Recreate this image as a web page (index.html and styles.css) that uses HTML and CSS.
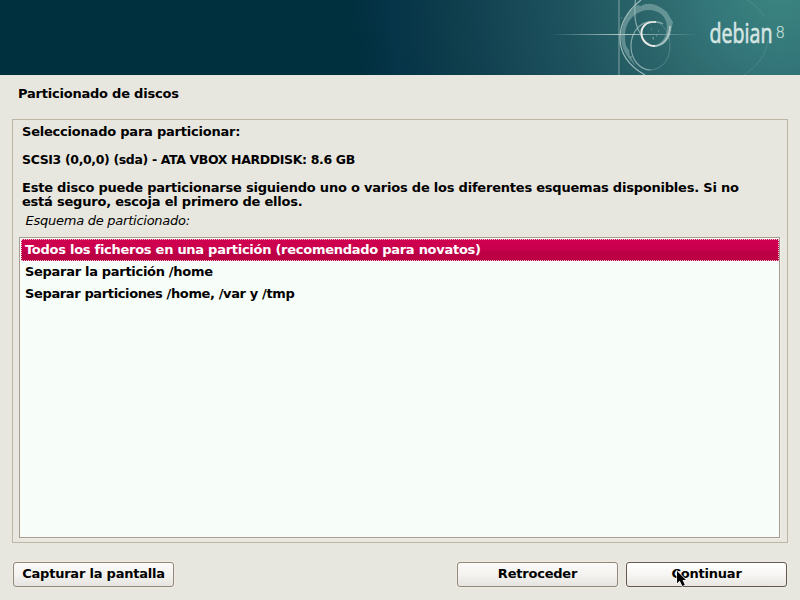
FILE: index.html
```html
<!DOCTYPE html>
<html lang="es">
<head>
<meta charset="utf-8">
<title>Particionado de discos</title>
<link rel="stylesheet" href="styles.css">
</head>
<body>
<header class="banner">
  <svg class="art" width="260" height="75" viewBox="540 0 260 75" fill="none" stroke="#b9d0cc" aria-hidden="true">
    <defs>
      <linearGradient id="beam" gradientUnits="userSpaceOnUse" x1="550" y1="0" x2="698" y2="0">
        <stop offset="0" stop-color="#c3d7d4" stop-opacity="0"/>
        <stop offset=".5" stop-color="#c3d7d4" stop-opacity=".9"/>
        <stop offset="1" stop-color="#c3d7d4" stop-opacity="0"/>
      </linearGradient>
    </defs>
    <path d="M619 0V75" stroke-width="1.8" opacity=".35"/>
    <rect x="550" y="34" width="148" height="1" fill="url(#beam)" stroke="none"/>
    <path d="M641 0C627 11 620 23 620 38C620 53 629 66 645 75" stroke-width="1.2" opacity=".8"/>
    <path d="M635.5 0C634 12 634 24 640 33C642 38 645 42 649 44" stroke-width="1.2" opacity=".65"/>
    <path d="M621 37C621 24 628 11 635 7L637 5L641 6C645 3 652 3 658 6L663 9L667 12L671 19L673 22L671 31C670 40 663 47 654 47L654 45.5C662 44 667 36 667 28C667 16 659 10 648 10C634 11 625 23 625 36C625 43 626 47 629 50L630 56L636 66C626 57 621 48 621 37Z" fill="#9bbdbb" stroke="none" opacity=".5"/>
    <path d="M670 26C670 38 663 46 654 46" stroke="#c7dbd7" stroke-width="1.8" opacity=".7"/>
    <path d="M663 24C659 21 655 22 653 22" stroke="#c7dbd7" stroke-width="1.2" opacity=".6"/>
    <path d="M656 22C646 21 641 27 641.5 34C642 41 647 46 655 46" stroke="#f1eee8" stroke-width="1.9"/>
    <path d="M656 22C641 19 631 32 631 46C631 60 640 70 651 70" stroke-width="1.2" opacity=".65"/>
    <path d="M651 70C662 69 670 60 670 46C670 34 664 24 656 22" opacity=".28"/>
    <path d="M651 29h1M658 31h1M652 38h2M653 39h1M656 36h1M621 18h1M630 57h2" opacity=".6"/>
    <path d="M747 0C756 5 761 11 764 17M768 40C766 54 758 66 744 75" opacity=".16"/>
    <text class="wordmark" x="709.5" y="43" textLength="63" lengthAdjust="spacingAndGlyphs">debian</text>
    <text class="version" x="775.5" y="38" textLength="9.5" lengthAdjust="spacingAndGlyphs">8</text>
  </svg>
</header>
<main class="installer">
  <h1 class="title">Particionado de discos</h1>
  <section class="panel">
    <div class="description">
      <p>Seleccionado para particionar:</p>
      <p class="disk">SCSI3 (0,0,0) (sda) - ATA VBOX HARDDISK: 8.6 GB</p>
      <p>Este disco puede particionarse siguiendo uno o varios de los diferentes esquemas disponibles. Si no<br>está seguro, escoja el primero de ellos.</p>
    </div>
    <div class="label">Esquema de particionado:</div>
    <ul class="options">
      <li class="option selected">Todos los ficheros en una partición (recomendado para novatos)</li>
      <li class="option home">Separar la partición /home</li>
      <li class="option split">Separar particiones /home, /var y /tmp</li>
    </ul>
  </section>
  <footer class="actions">
    <button class="button">Capturar la pantalla</button>
    <button class="button back">Retroceder</button>
    <button class="button hover">Continuar</button>
  </footer>
</main>
<svg class="cursor" width="12" height="18" viewBox="0 0 12 18" aria-hidden="true"><path d="M1 1V13.3L3.8 10.8L6.3 16L8.8 15L6.6 10H10Z" fill="#000" stroke="#fff" stroke-width="1.2" paint-order="stroke"/></svg>
</body>
</html>
```
FILE: styles.css
```css
* { box-sizing: border-box; }
body {
  margin: 0;
  width: 800px;
  height: 600px;
  overflow: hidden;
  position: relative;
  display: flex;
  flex-direction: column;
  background: #e8e7df;
  color: #000;
  font: bold 13px/14px "DejaVu Sans", sans-serif;
  letter-spacing: -.215px;
}
.banner {
  height: 75px;
  flex: none;
  display: flex;
  justify-content: flex-end;
  background: radial-gradient(circle at 780px -10px, #3b8580 0, #34777a 70px, #2c676c 130px, #205660 200px, #184a58 260px, #0e3d4c 330px, #063448 390px, #002f3e 430px);
}
.art { display: block; letter-spacing: 0; }
.wordmark { font: 27px "Open Sans", sans-serif; fill: #d5e6e2; stroke: #d5e6e2; stroke-width: .7; }
.version { font: 200 15px "DejaVu Sans", sans-serif; fill: #d0e3df; stroke: #d0e3df; stroke-width: .2; }
.installer {
  flex: 1;
  display: flex;
  flex-direction: column;
  padding: 12px 12px 12px;
}
.title { margin: 0 0 18px 6px; height: 14px; font: inherit; }
.panel {
  height: 424px;
  border: 1px solid #bdb5a5;
  padding: 5px 7px 4px 6px;
  display: flex;
  flex-direction: column;
}
.description { padding-left: 3px; }
.description p { margin: 0 0 14px; white-space: nowrap; }
.description p:last-child { margin: 0; }
.description .disk { font-size: 12.5px; letter-spacing: -.36px; }
.label { font-weight: normal; font-style: italic; letter-spacing: -.25px; margin: 5px 0 9px 6.5px; height: 14px; }
.options {
  list-style: none;
  margin: 0;
  padding: 1px 0 0 1px;
  flex: 1;
  border: 1px solid #a69d8e;
  background: #f7fdf8;
  box-shadow: 1px 1px #efeeea;
}
.option { height: 22px; padding: 4px; white-space: nowrap; }
.selected {
  color: #fff;
  letter-spacing: -.27px;
  background: linear-gradient(#d0004f, #ca004e 50%, #bd0045 55%, #ba0044);
  outline: 1px dotted #f4bdd0;
  outline-offset: -1px;
}
.home { letter-spacing: -.3px; }
.split { letter-spacing: -.37px; }
.actions { display: flex; margin: 19px 1px 0; gap: 8px; }
.button {
  width: 161px;
  height: 25px;
  padding: 0 0 1px;
  font: inherit;
  letter-spacing: inherit;
  color: #000;
  border: 1px solid #928878;
  border-radius: 3px;
  background: linear-gradient(#fbfaf8, #f4f3f0 50%, #e5e4df);
  box-shadow: 0 0 0 1px #eeebe4;
}
.back { margin-left: auto; }
.hover { border-color: #655750; background: linear-gradient(#fff, #f8f6f3 50%, #e7e6e2); }
.cursor { position: absolute; left: 676px; top: 570px; }
```
